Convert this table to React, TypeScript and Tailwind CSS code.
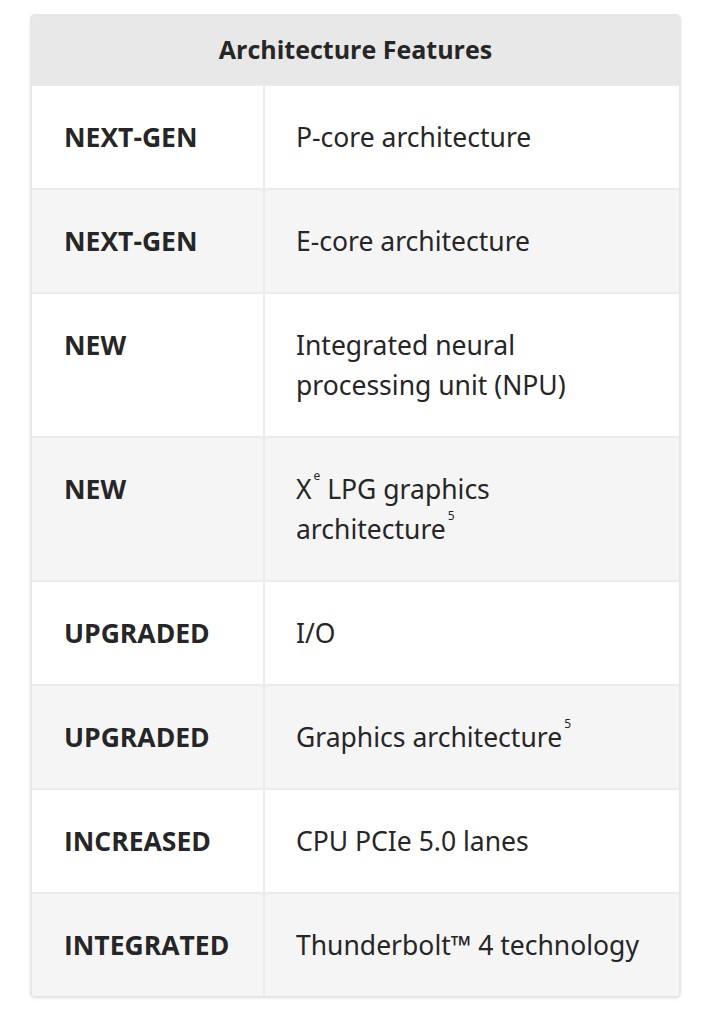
const Sup = ({ children }: { children: string }) => (
  <span className="relative -top-[19px] ml-[2px] text-[12px] leading-none">{children}</span>
);

const rows = [
  { label: "NEXT-GEN", text: <>P-core architecture</> },
  { label: "NEXT-GEN", text: <>E-core architecture</> },
  { label: "NEW", text: <>Integrated neural processing unit (NPU)</> },
  {
    label: "NEW",
    text: (
      <>
        X<Sup>e</Sup> LPG graphics architecture<Sup>5</Sup>
      </>
    ),
  },
  { label: "UPGRADED", text: <>I/O</> },
  {
    label: "UPGRADED",
    text: (
      <>
        Graphics architecture<Sup>5</Sup>
      </>
    ),
  },
  { label: "INCREASED", text: <>CPU PCIe 5.0 lanes</> },
  { label: "INTEGRATED", text: <>Thunderbolt™ 4 technology</> },
];

export default function App() {
  return (
    <div className="min-h-screen bg-white pt-[14px] px-[30px] text-[#262626]">
      <div className="w-[651px] rounded-[5px] border-2 border-[#e6e6e6] shadow-[0_1px_3px_rgba(0,0,0,0.08)] overflow-hidden">
        <div className="h-[68px] bg-[#e8e8e8] flex items-center justify-center font-['Open_Sans',sans-serif] font-bold text-[25px]">
          Architecture Features
        </div>
        {rows.map((row, i) => (
          <div
            key={i}
            className={`grid grid-cols-[233px_1fr] border-t-2 border-[#ebebeb] ${
              i % 2 === 1 ? "bg-[#f5f5f5]" : "bg-white"
            }`}
          >
            <div className="pl-[32px] py-[31px] border-r-2 border-[#ebebeb] font-['Open_Sans',sans-serif] font-bold text-[26.5px] leading-[40px]">
              {row.label}
            </div>
            <div className="pl-[31px] pr-[30px] py-[31px] font-['Noto_Sans',sans-serif] text-[26.5px] leading-[40px]">
              {row.text}
            </div>
          </div>
        ))}
      </div>
    </div>
  );
}
